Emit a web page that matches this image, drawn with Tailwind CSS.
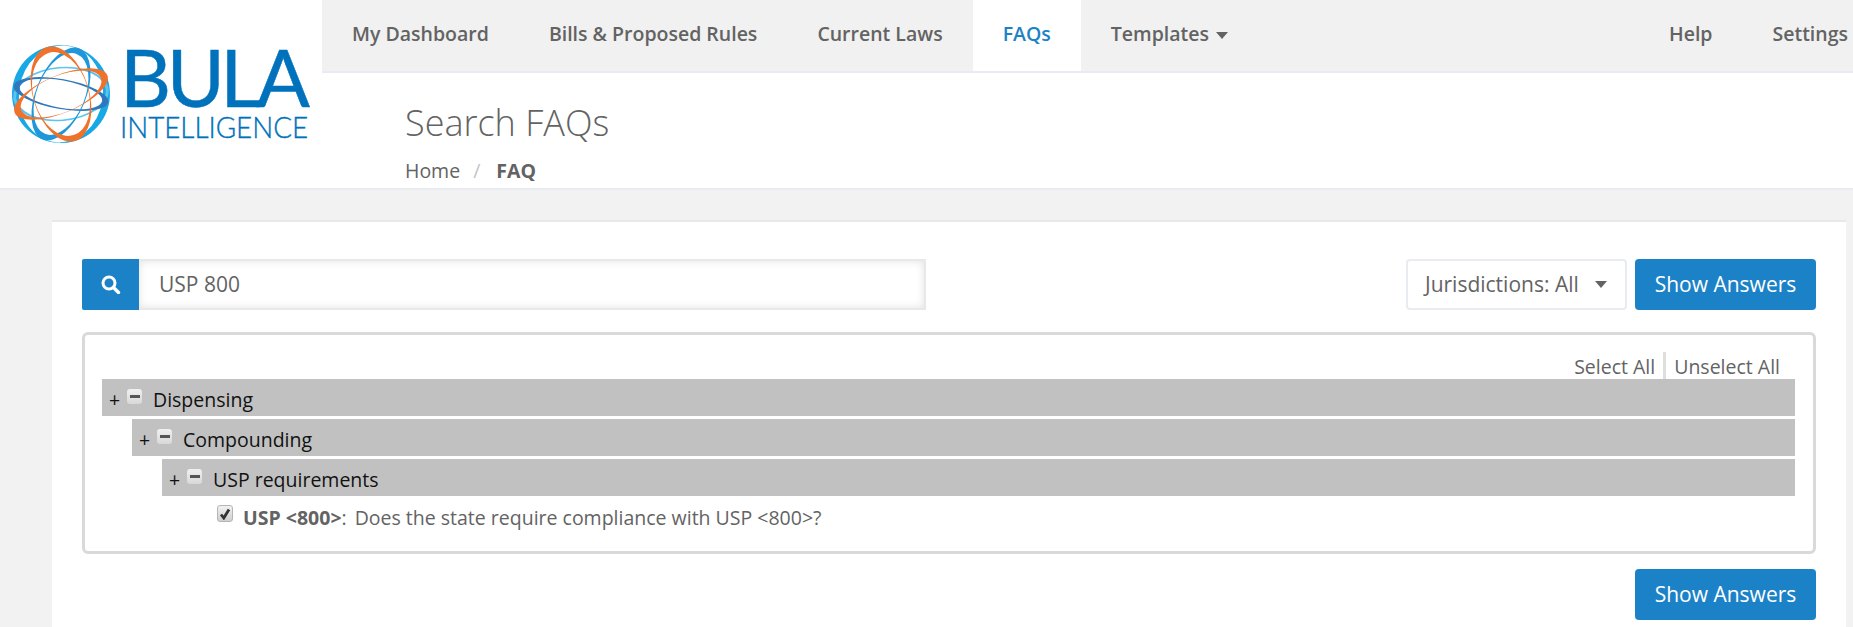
<!DOCTYPE html>
<html lang="en">
<head>
  <meta charset="UTF-8">
  <title>Search FAQs</title>
  <script src="https://cdn.jsdelivr.net/npm/@tailwindcss/browser@4"></script>
</head>
<body class="bg-[#f2f2f2] h-[627px] overflow-hidden font-['Open_Sans',sans-serif] text-[19.5px] text-[#636363]">

  <!-- header -->
  <header class="flex h-[190px] bg-white border-b-2 border-[#e8ecf0]">
    <div class="w-[322px] shrink-0">
      <svg width="322" height="188" viewBox="0 0 322 188" fill-rule="evenodd">
        <g transform="translate(61 94)">
          <!-- each ring is an outer ellipse minus an inner one, so it tapers -->
          <path transform="rotate(8)" fill="#17a9e6" d="M-49 0a49 49 0 1 0 98 0a49 49 0 1 0-98 0ZM-42 0a42 48.5 0 1 0 84 0a42 48.5 0 1 0-84 0Z"/>
          <path transform="rotate(-5)" fill="#5cc4ee" d="M-48 0a48 27 0 1 0 96 0a48 27 0 1 0-96 0ZM-45 0a45 25.5 0 1 0 90 0a45 25.5 0 1 0-90 0Z"/>
          <path transform="rotate(10)" fill="#2f78bd" d="M-48 0a48 15 0 1 0 96 0a48 15 0 1 0-96 0ZM-42 0a42 13.6 0 1 0 84 0a42 13.6 0 1 0-84 0Z"/>
          <path transform="rotate(22)" fill="#1f97d8" d="M-25 0a25 49 0 1 0 50 0a25 49 0 1 0-50 0ZM-24 0a24 43 0 1 0 48 0a24 43 0 1 0-48 0Z"/>
          <path transform="rotate(-17)" fill="#f0722a" d="M-28 0a28 49 0 1 0 56 0a28 49 0 1 0-56 0ZM-27.4 0a27.4 43 0 1 0 54.8 0a27.4 43 0 1 0-54.8 0Z"/>
          <path transform="rotate(-22)" fill="#f0722a" d="M-50 0a50 19 0 1 0 100 0a50 19 0 1 0-100 0ZM-43 0a43 18.5 0 1 0 86 0a43 18.5 0 1 0-86 0Z"/>
        </g>
        <text x="120" y="107" font-family="Lato, sans-serif" font-size="79" font-weight="400" fill="#0072bc" stroke="#0072bc" stroke-width="0.5" textLength="190" lengthAdjust="spacing">BULA</text>
        <text x="120" y="138" font-family="Lato, sans-serif" font-size="29" font-weight="300" fill="#0072bc" stroke="#0072bc" stroke-width="0.4" textLength="188" lengthAdjust="spacingAndGlyphs">INTELLIGENCE</text>
      </svg>
    </div>

    <div class="flex-1 min-w-0">
      <nav class="flex h-[73px] bg-[#f1f1f1] border-b-2 border-[#e8ecf0] font-semibold mr-[-25px]">
        <a class="px-[30px] pt-[19px]">My Dashboard</a>
        <a class="px-[30px] pt-[19px]">Bills &amp; Proposed Rules</a>
        <a class="px-[30px] pt-[19px]">Current Laws</a>
        <a class="px-[30px] pt-[19px] h-[71px] bg-white text-[#1c82c7]">FAQs</a>
        <a class="pl-[30px] pt-[19px] flex items-start gap-[7px]">Templates
          <span class="mt-[13px] border-x-[6.5px] border-x-transparent border-t-[7px] border-t-[#636363]"></span>
        </a>
        <a class="ml-auto px-[30px] pt-[19px]">Help</a>
        <a class="px-[30px] pt-[19px]">Settings</a>
      </nav>
      <div class="pl-[83px]">
        <h1 class="text-[36px] font-light leading-[49px] mt-[25px]">Search FAQs</h1>
        <div class="flex mt-[10px] leading-[27px]">
          <span>Home</span>
          <span class="ml-[13px] text-[#c4c4c4]">/</span>
          <b class="ml-[16px] font-bold">FAQ</b>
        </div>
      </div>
    </div>
  </header>

  <!-- main card -->
  <main class="mt-[30px] ml-[52px] w-[1794px] h-[420px] bg-white border-t-2 border-[#e8e8ea] px-[30px] pt-[37px]">
    <div class="flex h-[51px] text-[21px]">
      <span class="w-[57px] bg-[#1c82c7] flex items-center justify-center rounded-l-[2px]">
        <svg width="21" height="19" viewBox="0 0 21 19" fill="none" stroke="white">
          <circle cx="9" cy="8" r="6" stroke-width="3"/>
          <path d="M13.5 12.5 L18.5 17.5" stroke-width="3.4" stroke-linecap="round"/>
        </svg>
      </span>
      <input value="USP 800" class="w-[787px] pl-[20px] border-y-2 border-r-2 border-[#e8e8e8] shadow-[inset_0_0_9px_rgba(0,0,0,0.12)] outline-none">
      <div class="ml-auto flex gap-[8px]">
        <button class="w-[221px] flex items-center pl-[17px] gap-[16px] border-2 border-[#e8ecf0] rounded-[4px]">Jurisdictions: All
          <span class="border-x-[6.5px] border-x-transparent border-t-[7px] border-t-[#636363]"></span>
        </button>
        <button class="w-[181px] bg-[#1c82c7] text-white rounded-[4px]">Show Answers</button>
      </div>
    </div>

    <section class="mt-[22px] h-[222px] border-[3px] border-[#d9d9d9] rounded-[6px] pl-[17px] pr-[18px] pt-[17px]">
      <div class="flex justify-end h-[27px] pr-[15px] leading-[30px]">
        <a class="pr-[8px] border-r-[3px] border-[#dedede]">Select All</a>
        <a class="pl-[8px]">Unselect All</a>
      </div>

      <div class="flex flex-col gap-[3px] text-[#111]">
        <div class="flex items-center h-[37px] bg-[#c1c1c1] pl-[7px] pt-[4px]">
          <span class="w-[18px]">+</span>
          <span class="w-[15px] h-[15px] mb-[7px] rounded-[3px] bg-gradient-to-b from-[#f0f0f0] to-[#d8d8d8] flex items-center justify-center"><i class="block w-[10px] h-[3px] bg-[#555]"></i></span>
          <span class="ml-[11px]">Dispensing</span>
        </div>
        <div class="flex items-center h-[37px] bg-[#c1c1c1] pl-[7px] pt-[4px] ml-[30px]">
          <span class="w-[18px]">+</span>
          <span class="w-[15px] h-[15px] mb-[7px] rounded-[3px] bg-gradient-to-b from-[#f0f0f0] to-[#d8d8d8] flex items-center justify-center"><i class="block w-[10px] h-[3px] bg-[#555]"></i></span>
          <span class="ml-[11px]">Compounding</span>
        </div>
        <div class="flex items-center h-[37px] bg-[#c1c1c1] pl-[7px] pt-[4px] ml-[60px]">
          <span class="w-[18px]">+</span>
          <span class="w-[15px] h-[15px] mb-[7px] rounded-[3px] bg-gradient-to-b from-[#f0f0f0] to-[#d8d8d8] flex items-center justify-center"><i class="block w-[10px] h-[3px] bg-[#555]"></i></span>
          <span class="ml-[11px]">USP requirements</span>
        </div>
      </div>

      <div class="flex items-start ml-[115px] mt-[8px] leading-[27px]">
        <span class="w-[16px] h-[17px] mt-[1px] rounded-[3px] border border-[#b5b5b5] bg-gradient-to-b from-[#f2f2f2] to-[#cfcfcf] flex items-center justify-center">
          <svg width="12" height="12" viewBox="0 0 12 12" fill="none" stroke="#333" stroke-width="2.8"><path d="M2 6.5 L4.8 10 L10 1.5"/></svg>
        </span>
        <b class="ml-[10px] font-bold">USP &lt;800&gt;</b><span>:</span>
        <span class="ml-[8px]">Does the state require compliance with USP &lt;800&gt;?</span>
      </div>
    </section>

    <div class="flex justify-end mt-[15px]">
      <button class="w-[181px] h-[51px] text-[21px] bg-[#1c82c7] text-white rounded-[4px]">Show Answers</button>
    </div>
  </main>
</body>
</html>
